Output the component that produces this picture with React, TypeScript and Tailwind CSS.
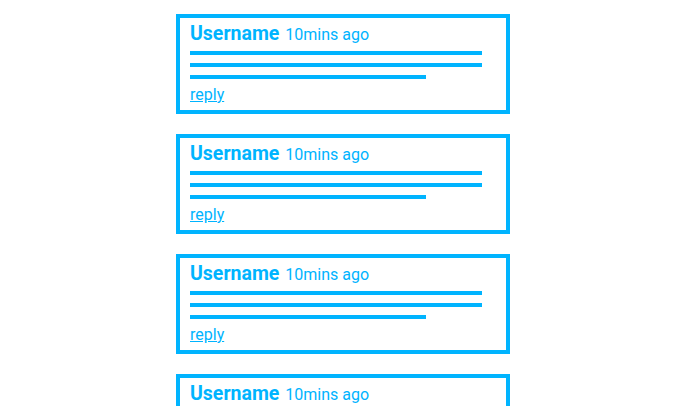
const comments = [1, 2, 3, 4];

function Comment() {
  return (
    <div className="w-[334px] h-[100px] shrink-0 border-4 border-[#00b4ff] px-[10px] pt-[4px] flex flex-col">
      <div className="flex items-baseline leading-[24px] text-[#00b4ff] whitespace-nowrap">
        <span className="text-[19.5px] font-bold">Username</span>
        <span className="ml-[6px] text-[16px]">10mins ago</span>
      </div>
      <div className="mt-[4px] flex flex-col gap-[8px]">
        <div className="h-[4px] w-[292px] bg-[#00b4ff]" />
        <div className="h-[4px] w-[292px] bg-[#00b4ff]" />
        <div className="h-[4px] w-[236px] bg-[#00b4ff]" />
      </div>
      <a href="#" className="mt-[6px] text-[16px] leading-[20px] text-[#00b4ff] underline self-start">
        reply
      </a>
    </div>
  );
}

export default function App() {
  return (
    <div className="w-[686px] h-[406px] overflow-hidden bg-white flex flex-col items-center gap-[20px] pt-[14px] font-['Roboto',sans-serif]">
      {comments.map((c) => (
        <Comment key={c} />
      ))}
    </div>
  );
}
